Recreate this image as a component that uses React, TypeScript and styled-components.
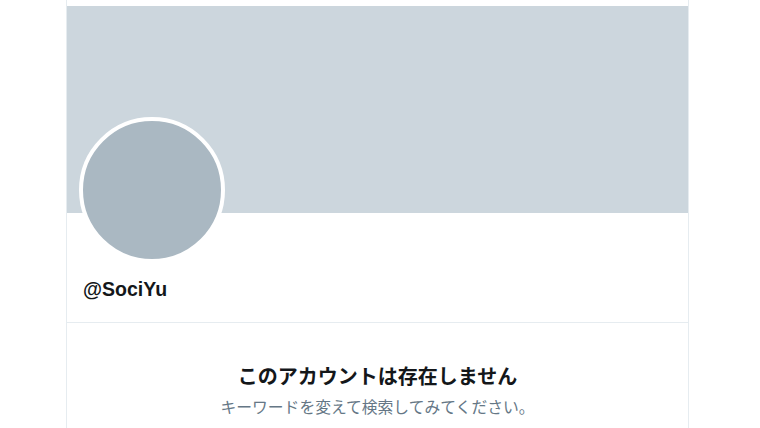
import React from "react";
import styled, { createGlobalStyle } from "styled-components";

const GlobalStyle = createGlobalStyle`
  html, body {
    margin: 0;
    padding: 0;
    background: #ffffff;
    font-family: "Liberation Sans", "Noto Sans CJK JP", sans-serif;
  }
`;

const Column = styled.main`
  width: 623px;
  margin-left: 66px;
  padding-top: 6px;
  min-height: 428px;
  box-sizing: border-box;
  border-left: 1px solid #e6ecf0;
  border-right: 1px solid #e6ecf0;
`;

const Banner = styled.div`
  height: 207px;
  background-color: #ccd6dd;
`;

const Profile = styled.section`
  padding: 0 12px 22px 12px;
  border-bottom: 1px solid #e6ecf0;
`;

const Avatar = styled.div`
  width: 138px;
  height: 138px;
  margin-top: -96px;
  border-radius: 50%;
  border: 4px solid #ffffff;
  background-color: #aab8c2;
`;

const Handle = styled.div`
  margin-top: 15px;
  padding-left: 4px;
  font-size: 19.5px;
  line-height: 22px;
  font-weight: bold;
  color: #14171a;
`;

const Empty = styled.section`
  padding-top: 40px;
  display: flex;
  flex-direction: column;
  align-items: center;
  gap: 7px;
`;

const Title = styled.h2`
  margin: 0;
  font-size: 20px;
  line-height: 28px;
  font-weight: bold;
  color: #14171a;
`;

const Hint = styled.p`
  margin: 0;
  font-size: 15.8px;
  line-height: 20px;
  color: #657786;
`;

const App: React.FC = () => {
  return (
    <>
      <GlobalStyle />
      <Column>
        <Banner />
        <Profile>
          <Avatar />
          <Handle>@SociYu</Handle>
        </Profile>
        <Empty>
          <Title>このアカウントは存在しません</Title>
          <Hint>キーワードを変えて検索してみてください。</Hint>
        </Empty>
      </Column>
    </>
  );
};

export default App;
